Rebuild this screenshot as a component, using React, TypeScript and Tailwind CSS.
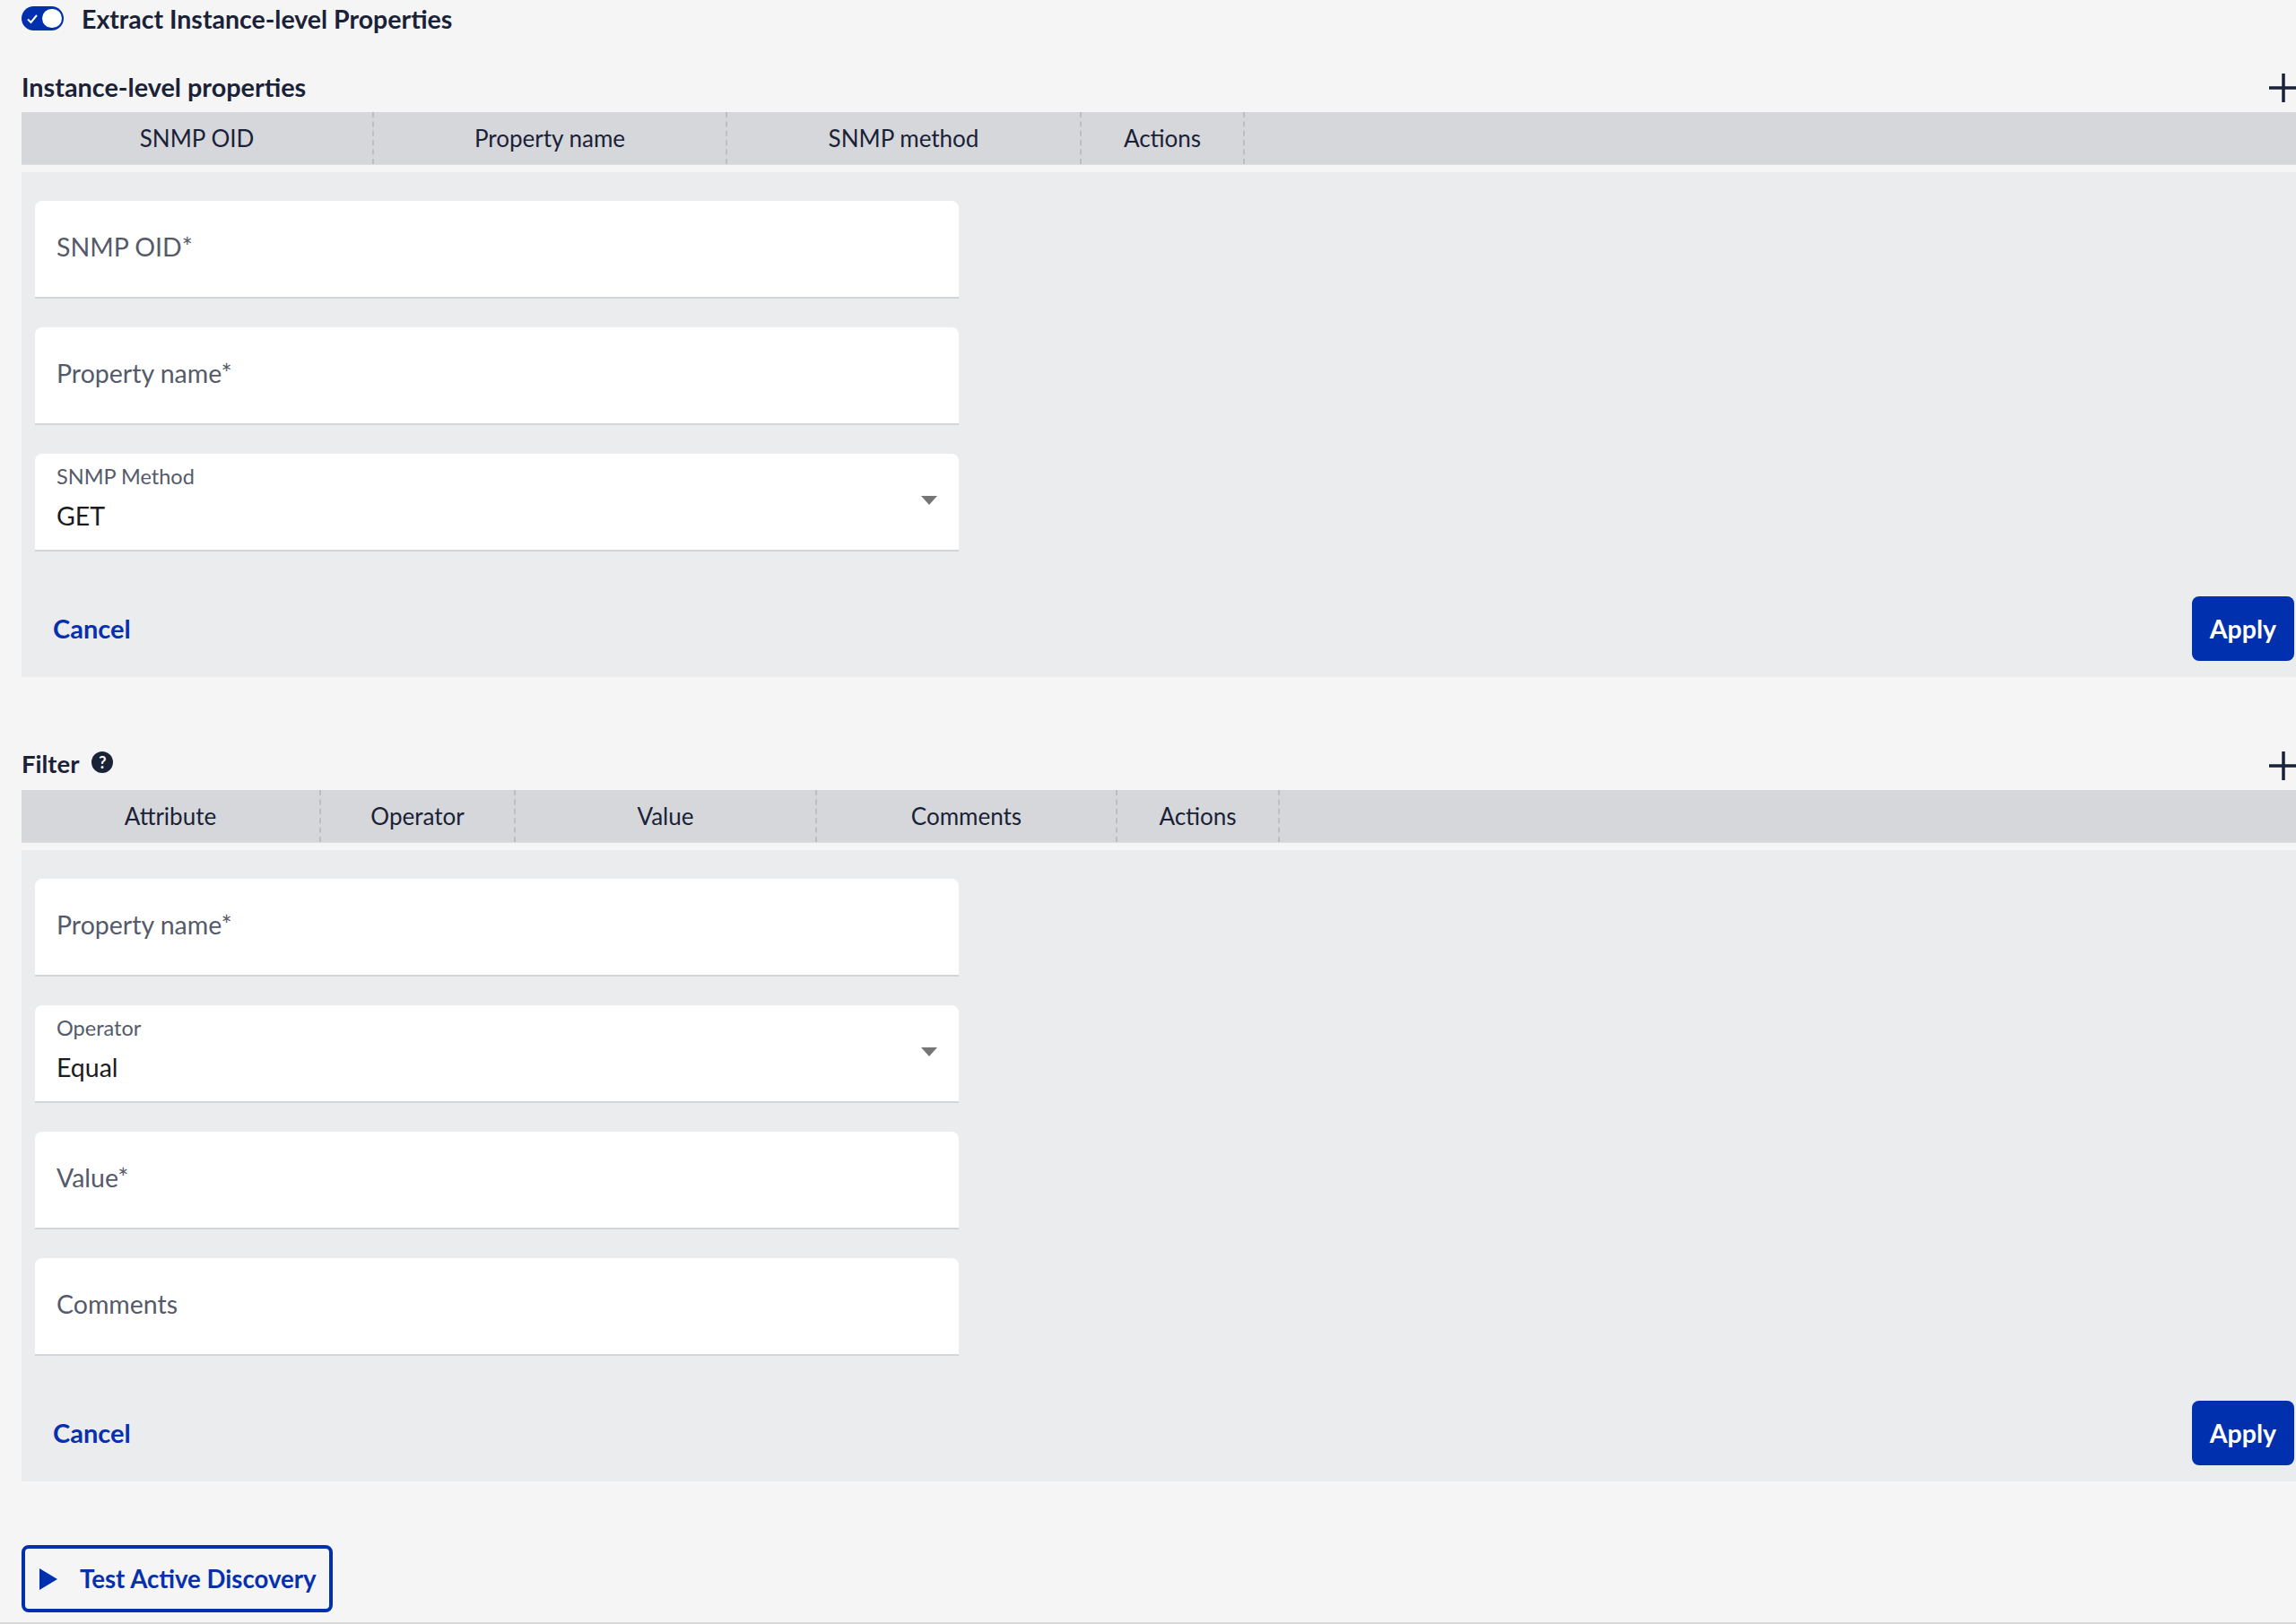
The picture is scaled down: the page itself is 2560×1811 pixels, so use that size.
import type { ReactNode } from "react";

const font = "font-['Lato','Noto_Sans',sans-serif]";

function Plus() {
  return (
    <svg width="30" height="32" viewBox="0 0 30 32" className="shrink-0">
      <path d="M0 16H30M16 0V32" stroke="#1a2238" strokeWidth="3.5" fill="none" />
    </svg>
  );
}

function TableHead({ cols }: { cols: { label: string; w: string }[] }) {
  return (
    <div className="flex h-[59px] bg-[#d6d7db] border-b border-[#dddee1]">
      {cols.map((c) => (
        <div
          key={c.label}
          className={`${c.w} flex items-center justify-center border-r-2 border-dashed border-[#bdbec4] pt-[1px] text-[26px] text-[#1a2238]`}
        >
          {c.label}
        </div>
      ))}
    </div>
  );
}

function TextField({ label }: { label: string }) {
  return (
    <div className="h-[109px] w-[1030px] rounded-t-[8px] bg-white border-b-2 border-[#d3d5db] pl-6 flex items-center pb-[4px] text-[28.5px] text-[#555a6b]">
      {label}
    </div>
  );
}

function SelectField({ label, value }: { label: string; value: string }) {
  return (
    <div className="relative h-[109px] w-[1030px] rounded-t-[8px] bg-white border-b-2 border-[#d3d5db] pl-6 pt-[10px]">
      <div className="text-[23.5px] leading-[30px] text-[#555a6b]">{label}</div>
      <div className="mt-[12px] text-[28.5px] leading-[34px] text-[#1c1c1f]">{value}</div>
      <svg width="18" height="10" viewBox="0 0 18 10" className="absolute right-[24px] top-[47px]">
        <path d="M0 0H18L9 10Z" fill="#757575" />
      </svg>
    </div>
  );
}

function Panel({ children }: { children: ReactNode }) {
  return (
    <div className="mt-2 bg-[#ebecee] pt-8 pb-[18px] pl-[15px] pr-[2px]">
      <div className="flex flex-col gap-8">{children}</div>
      <div className="mt-[50px] flex items-center justify-between">
        <button className="ml-[20px] text-[29px] font-bold text-[#0630ad]">Cancel</button>
        <button className="h-[72px] w-[114px] rounded-[8px] bg-[#0030ad] text-[28.5px] font-bold text-white">
          Apply
        </button>
      </div>
    </div>
  );
}

export default function App() {
  return (
    <div className={`${font} flex h-[1811px] flex-col justify-between overflow-hidden bg-[#f5f5f5]`}>
      <div className="pl-6 pt-[7px]">
        {/* Toggle */}
        <div className="flex h-[27px] items-center gap-[20px]">
          <div className="relative flex h-[27px] w-[47px] items-center rounded-full bg-[#0030ad] pl-[5px]">
            <svg width="14" height="12" viewBox="0 0 14 12">
              <path d="M2 6.5L5.5 10L12 2" stroke="#fff" strokeWidth="2" fill="none" />
            </svg>
            <span className="absolute right-[2px] top-[3px] h-[21px] w-[22px] rounded-full bg-white" />
          </div>
          <span className="pt-[2px] text-[28.5px] font-bold text-[#1a2238]">Extract Instance-level Properties</span>
        </div>

        {/* Instance-level properties */}
        <div className="mt-[48px] flex h-[43px] items-center justify-between pb-[12px]">
          <span className="text-[28.8px] font-bold text-[#1a2238]">Instance-level properties</span>
          <Plus />
        </div>
        <TableHead
          cols={[
            { label: "SNMP OID", w: "w-[393px]" },
            { label: "Property name", w: "w-[394px]" },
            { label: "SNMP method", w: "w-[395px]" },
            { label: "Actions", w: "w-[182px]" },
          ]}
        />
        <Panel>
          <TextField label="SNMP OID*" />
          <TextField label="Property name*" />
          <SelectField label="SNMP Method" value="GET" />
        </Panel>

        {/* Filter */}
        <div className="mt-[83px] flex h-[43px] items-center justify-between pb-[12px]">
          <div className="flex items-center gap-[14px]">
            <span className="-mt-[3px] text-[27.5px] font-bold text-[#1a2238]">Filter</span>
            <span className="-mt-[8px] flex h-6 w-6 items-center justify-center rounded-full bg-[#1a2238] text-[18px] font-bold leading-none text-white">
              ?
            </span>
          </div>
          <Plus />
        </div>
        <TableHead
          cols={[
            { label: "Attribute", w: "w-[334px]" },
            { label: "Operator", w: "w-[217px]" },
            { label: "Value", w: "w-[336px]" },
            { label: "Comments", w: "w-[335px]" },
            { label: "Actions", w: "w-[181px]" },
          ]}
        />
        <Panel>
          <TextField label="Property name*" />
          <SelectField label="Operator" value="Equal" />
          <TextField label="Value*" />
          <TextField label="Comments" />
        </Panel>

        {/* Test button */}
        <button className="mt-[71px] flex h-[75px] w-[347px] items-center rounded-[8px] border-4 border-[#0030ad] pl-4 text-[27.6px] font-bold text-[#0630ad]">
          <svg width="20" height="24" viewBox="0 0 20 24" className="mr-[25px]">
            <path d="M0 0L20 12L0 24Z" fill="#0030ad" />
          </svg>
          Test Active Discovery
        </button>
      </div>
      <div className="h-[2px] bg-[#d8d8d8]" />
    </div>
  );
}
